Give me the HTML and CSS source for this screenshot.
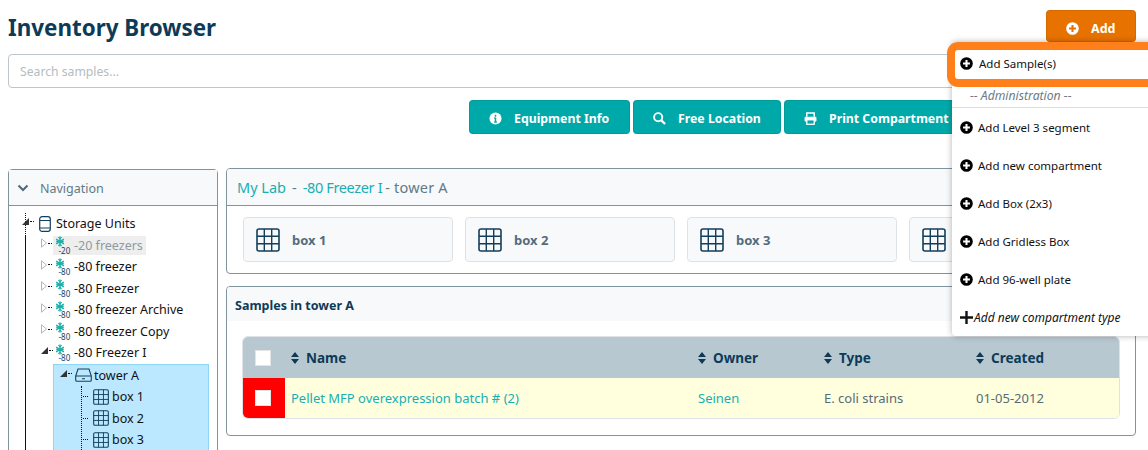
FILE: index.html
```html
<!DOCTYPE html>
<html lang="en">
<head>
<meta charset="utf-8">
<title>Inventory Browser</title>
<link rel="stylesheet" href="styles.css">
</head>
<body>
<svg class="defs" width="0" height="0" aria-hidden="true">
  <defs>
    <symbol id="grid" viewBox="0 0 24 24"><rect x="1" y="1" width="22" height="22" rx="2" fill="none" stroke="currentColor" stroke-width="1.6"/><path d="M8.3 1v22M15.7 1v22M1 8.3h22M1 15.7h22" fill="none" stroke="currentColor" stroke-width="1.4"/></symbol>
    <symbol id="flake" viewBox="0 0 10 12"><g stroke="currentColor" fill="none"><path d="M5 .5v11M.8 3.400l8.400 5.200M9.200 3.400.8 8.600" stroke-width="1.500"/><path d="M3.200 1.200 5 3l1.800-1.800M3.200 10.800 5 9l1.800 1.800M1 5.400 3 6 1 6.600M9 5.400 7 6l2 .6" stroke-width="1.100"/></g></symbol>
    <symbol id="open" viewBox="0 0 7 7"><path d="M7 0v7H0z" fill="#333"/></symbol>
    <symbol id="closed" viewBox="0 0 6 10"><path d="M.5.8l5 4.200-5 4.200z" fill="#fff" stroke="#b5b5b5"/></symbol>
    <symbol id="pluscircle" viewBox="0 0 14 14"><circle cx="7" cy="7" r="6.800" fill="currentColor"/><path d="M7 3.300v7.400M3.300 7h7.400" stroke="var(--plus,#fff)" stroke-width="2.200"/></symbol>
    <symbol id="sort" viewBox="0 0 8 12"><path d="M4 0l4 5H0zM4 12l4-5H0z" fill="currentColor"/></symbol>
  </defs>
</svg>

<header class="topbar">
  <h1 class="title">Inventory Browser</h1>
  <button class="btn btn-add"><svg class="ic13 plus-orange"><use href="#pluscircle"/></svg><span>Add</span></button>
</header>

<input class="search" type="text" placeholder="Search samples...">

<div class="actions">
  <button class="btn btn-teal btn-info"><svg class="ic13" viewBox="0 0 14 14"><circle cx="7" cy="7" r="6.500" fill="#fff"/><path d="M7 3v2M7 6.200v4.600M5.600 6.400H7M5.600 10.800h2.800" stroke="#00a9a9" stroke-width="1.600" fill="none"/></svg><span>Equipment Info</span></button>
  <button class="btn btn-teal btn-free"><svg class="ic13" viewBox="0 0 14 14"><circle cx="5.600" cy="5.600" r="4.400" fill="none" stroke="#fff" stroke-width="2"/><path d="M9 9l4 4" stroke="#fff" stroke-width="2.400"/></svg><span>Free Location</span></button>
  <button class="btn btn-teal btn-print"><svg class="ic13" viewBox="0 0 14 14"><path d="M3 5V1h8v4" fill="none" stroke="#fff" stroke-width="1.600"/><rect x=".6" y="5" width="12.800" height="5.400" rx="1.400" fill="#fff"/><rect x="3" y="8.400" width="8" height="4.800" fill="#00a9a9" stroke="#fff" stroke-width="1.400"/></svg><span>Print Compartment</span></button>
</div>

<div class="columns">
  <aside class="nav">
    <div class="nav-head">
      <svg class="chev" viewBox="0 0 12 8"><path d="M1.500 1.500 6 6l4.500-4.500" fill="none" stroke="#4d6a7c" stroke-width="2"/></svg>
      <span>Navigation</span>
    </div>
    <ul class="tree">
      <li class="lvl1">
        <div class="node">
          <span class="tg"><svg class="tri"><use href="#open"/></svg></span>
          <svg class="ic-storage" viewBox="0 0 12 16"><rect x=".7" y=".7" width="10.600" height="14.600" rx="2.400" fill="none" stroke="#123f5c" stroke-width="1.200"/><path d="M.8 4.500h10.400M.8 12h10.400" stroke="#123f5c" stroke-width="1"/></svg>
          <span class="label">Storage Units</span>
        </div>
        <ul class="lvl2">
          <li class="node"><span class="tg"><svg class="tri-c"><use href="#closed"/></svg></span><span class="hl"><span class="fr"><svg class="flake"><use href="#flake"/></svg><small>-20</small></span><span class="label muted">-20 freezers</span></span></li>
          <li class="node"><span class="tg"><svg class="tri-c"><use href="#closed"/></svg></span><span class="fr"><svg class="flake"><use href="#flake"/></svg><small>-80</small></span><span class="label">-80 freezer</span></li>
          <li class="node"><span class="tg"><svg class="tri-c"><use href="#closed"/></svg></span><span class="fr"><svg class="flake"><use href="#flake"/></svg><small>-80</small></span><span class="label">-80 Freezer</span></li>
          <li class="node"><span class="tg"><svg class="tri-c"><use href="#closed"/></svg></span><span class="fr"><svg class="flake"><use href="#flake"/></svg><small>-80</small></span><span class="label">-80 freezer Archive</span></li>
          <li class="node"><span class="tg"><svg class="tri-c"><use href="#closed"/></svg></span><span class="fr"><svg class="flake"><use href="#flake"/></svg><small>-80</small></span><span class="label">-80 freezer Copy</span></li>
          <li class="node"><span class="tg"><svg class="tri"><use href="#open"/></svg></span><span class="fr"><svg class="flake"><use href="#flake"/></svg><small>-80</small></span><span class="label">-80 Freezer I</span></li>
          <li class="selected">
            <div class="node">
              <span class="tg3"><svg class="tri"><use href="#open"/></svg></span>
              <svg class="ic-tower" viewBox="0 0 17 14"><path d="M3 1h11l2.300 7v4a1.300 1.300 0 0 1-1.300 1.300H2a1.300 1.300 0 0 1-1.300-1.300V8z" fill="none" stroke="#123f5c" stroke-width="1.100"/><path d="M.8 8h15.400M7 10.800h3" stroke="#123f5c" stroke-width="1.100" fill="none"/></svg>
              <span class="label">tower A</span>
            </div>
            <ul class="lvl4">
              <li class="node"><span class="tg4"></span><svg class="ic-box"><use href="#grid"/></svg><span class="label">box 1</span></li>
              <li class="node"><span class="tg4"></span><svg class="ic-box"><use href="#grid"/></svg><span class="label">box 2</span></li>
              <li class="node"><span class="tg4"></span><svg class="ic-box"><use href="#grid"/></svg><span class="label">box 3</span></li>
            </ul>
          </li>
        </ul>
      </li>
    </ul>
  </aside>

  <main class="content">
    <section class="panel">
      <div class="crumbs"><a>My Lab</a><span class="sep1">-</span><a class="tight">-80 Freezer I</a><span class="sep2">- tower A</span></div>
      <div class="cards">
        <div class="card"><svg class="ic-card"><use href="#grid"/></svg><b>box 1</b></div>
        <div class="card"><svg class="ic-card"><use href="#grid"/></svg><b>box 2</b></div>
        <div class="card"><svg class="ic-card"><use href="#grid"/></svg><b>box 3</b></div>
        <div class="card"><svg class="ic-card"><use href="#grid"/></svg><b>box 4</b></div>
      </div>
    </section>

    <section class="panel samples">
      <div class="samples-head">Samples in tower A</div>
      <div class="table">
        <div class="tr thead">
          <div class="cell check"><span class="box"></span></div>
          <div class="cell"><svg class="sort"><use href="#sort"/></svg>Name</div>
          <div class="cell"><svg class="sort"><use href="#sort"/></svg>Owner</div>
          <div class="cell"><svg class="sort"><use href="#sort"/></svg>Type</div>
          <div class="cell"><svg class="sort"><use href="#sort"/></svg>Created</div>
        </div>
        <div class="tr tbody">
          <div class="cell check red"><span class="box"></span></div>
          <div class="cell"><a>Pellet MFP overexpression batch # (2)</a></div>
          <div class="cell"><a>Seinen</a></div>
          <div class="cell">E. coli strains</div>
          <div class="cell">01-05-2012</div>
        </div>
      </div>
    </section>
  </main>
</div>

<div class="menu">
  <div class="menu-item first"><svg class="ic13"><use href="#pluscircle"/></svg>Add Sample(s)</div>
  <div class="menu-head">-- Administration --</div>
  <div class="menu-item"><svg class="ic13"><use href="#pluscircle"/></svg>Add Level 3 segment</div>
  <div class="menu-item"><svg class="ic13"><use href="#pluscircle"/></svg>Add new compartment</div>
  <div class="menu-item"><svg class="ic13"><use href="#pluscircle"/></svg>Add Box (2x3)</div>
  <div class="menu-item"><svg class="ic13"><use href="#pluscircle"/></svg>Add Gridless Box</div>
  <div class="menu-item"><svg class="ic13"><use href="#pluscircle"/></svg>Add 96-well plate</div>
  <div class="menu-item last"><svg class="ic-plus" viewBox="0 0 12 12"><path d="M6 0v12M0 6h12" stroke="currentColor" stroke-width="2.200"/></svg><em>Add new compartment type</em></div>
</div>
<div class="spot"></div>
</body>
</html>
```
FILE: styles.css
```css
* { box-sizing: border-box; }
html, body { margin: 0; height: 450px; overflow: hidden; }
body { padding: 0 12px 0 8px; position: relative; font-family: "Noto Sans", "Open Sans", sans-serif; font-size: 13px; color: #0d3b57; background: #fff; }
ul { list-style: none; margin: 0; padding: 0; }
.defs { position: absolute; }
a { color: #00a9a9; }
button { font-family: inherit; }

.topbar { display: flex; justify-content: space-between; height: 54px; padding-top: 10px; }
.title { margin: 0; font-size: 22.4px; line-height: 36px; font-weight: 700; color: #0d3b57; }
.btn { display: inline-flex; align-items: center; border: 1px solid rgba(0,0,0,.08); border-radius: 4px; color: #fff; font-size: 12.3px; font-weight: 700; padding: 0; }
.btn-add { width: 90px; height: 32px; background: #e77200; font-size: 12.5px; padding: 4px 0 0 19px; gap: 12px; }
.plus-orange { color: #fff; --plus: #e77200; }
.ic13 { width: 13px; height: 13px; flex: none; }

.search { display: block; width: 100%; height: 34px; border: 1px solid #bcc6cc; border-radius: 4px; padding: 0 11px; font: 12.2px "Noto Sans", sans-serif; }
.search::placeholder { color: #b3bcc2; }

.actions { display: flex; gap: 3px; margin: 12px 0 0 461px; height: 34px; }
.btn-teal { background: #00a9a9; padding: 2px 0 0 19px; gap: 12px; height: 34px; flex: none; }
.btn-info { width: 161px; }
.btn-free { width: 148px; }
.btn-print { width: 180px; }

.columns { display: flex; gap: 8px; margin-top: 34px; align-items: flex-start; }
.nav { flex: none; width: 210px; margin-top: 1px; height: 400px; border: 1px solid #7f949f; border-radius: 4px; background: #fff; }
.nav-head { display: flex; align-items: center; height: 36px; background: #f8f9fa; border-bottom: 1px solid #7f949f; padding: 1px 0 0 8px; gap: 11px; color: #607a8a; font-size: 12.5px; }
.chev { width: 12px; height: 8px; }

.tree { padding: 7px 0 0 9px; position: relative; color: #111; font-size: 12.5px; }
.tree::before { content: ""; position: absolute; left: 16px; top: 7px; bottom: 0; border-left: 1px dotted #111; }
.node { display: flex; align-items: center; height: 21.5px; position: relative; }
.label { white-space: nowrap; }
.tg { width: 18px; flex: none; display: flex; align-items: center; position: relative; padding: 0 0 4px 5px; }
.lvl1 > .node .tg { width: 21px; padding-left: 4px; }
.tg::after, .tg3::after { content: ""; width: 4px; border-top: 1px dotted #111; margin-left: 1px; }
.tri { width: 7px; height: 7px; flex: none; }
.tri-c { width: 6px; height: 10px; flex: none; }
.ic-storage { width: 12px; height: 16px; margin-right: 5px; flex: none; }
.lvl2 { padding-left: 18px; position: relative; }
.lvl2::before { content: ""; position: absolute; left: 7px; top: 0; height: 400px; border-left: 1px dotted #111; }
.fr { position: relative; display: block; width: 18px; height: 20px; flex: none; margin-right: 2px; }
.flake { position: absolute; left: 1px; top: 1px; width: 10px; height: 11px; color: #1ab0aa; }
.fr small { position: absolute; left: 4.500px; top: 10.500px; font-size: 8px; line-height: 10px; color: #123f5c; }
.hl { display: flex; align-items: center; background: #eeeeee; width: 93px; height: 19px; margin-left: -1px; padding-left: 1px; }
.muted { color: #8c9aa3; }

.selected { margin-left: 17px; width: 156px; height: 200px; border: 1px solid #8ed6f5; background: #bce8ff; position: relative; }
.tg3 { width: 21px; flex: none; display: flex; align-items: center; padding: 0 0 4px 6px; }
.ic-tower { width: 17px; height: 14px; margin-right: 2px; flex: none; }
.lvl4 { position: relative; }
.lvl4::before { content: ""; position: absolute; left: 27px; top: 0; height: 180px; border-left: 1px dotted #111; }
.tg4 { width: 5px; margin: 0 5px 0 29px; flex: none; border-top: 1px dotted #111; }
.ic-box { width: 16px; height: 16px; color: #123f5c; margin-right: 3px; flex: none; }

.content { flex: 1; min-width: 0; display: flex; flex-direction: column; gap: 12px; }
.panel { border: 1px solid #7f949f; border-radius: 4px; background: #fff; overflow: hidden; }
.crumbs { height: 37px; line-height: 37px; padding-left: 10px; background: #f8f9fa; border-bottom: 1px solid #7f949f; font-size: 14.5px; color: #607a8a; }
.crumbs a { color: #18aeb4; }
.crumbs .tight { letter-spacing: -.35px; }
.sep1 { margin: 0 6px; }
.sep2 { margin-left: 3px; letter-spacing: .2px; }
.cards { display: flex; gap: 12px; padding: 11px 16px 11px; }
.card { flex: none; width: 210px; height: 45px; display: flex; align-items: center; padding-left: 12px; gap: 12px; background: #f8f9fa; border: 1px solid #dee2e6; border-radius: 4px; color: #566b7a; font-size: 13px; }
.ic-card { width: 24px; height: 24px; color: #123f5c; flex: none; }

.samples-head { height: 34px; line-height: 37px; padding-left: 8px; background: #f8f9fa; font-weight: 700; font-size: 12.5px; color: #0d3b57; }
.table { margin: 15px 15px 16px; border: 1px solid #dee2e6; border-radius: 6px; overflow: hidden; }
.tr { display: grid; grid-template-columns: 42px 407px 126px 152px 1fr; align-items: center; }
.thead { height: 41px; background: #b8c8d1; font-weight: 700; font-size: 13.5px; color: #0d3b57; }
.tbody { height: 40px; background: #ffffdd; color: #566b7a; font-size: 13px; }
.cell { padding-left: 6px; display: flex; align-items: center; height: 100%; white-space: nowrap; }
.tbody .cell { padding-bottom: 1px; }
.cell a { color: #18aeb4; }
.thead .check, .tbody .check { padding: 0 0 0 12px; }
.red { background: #ff0000; }
.box { width: 16px; height: 16px; background: #fff; border: 1px solid #e4e4e4; display: block; }
.sort { width: 8px; height: 12px; margin-right: 7px; color: #0d3b57; flex: none; }

.menu { position: absolute; left: 952px; top: 42px; width: 210px; height: 294px; background: #fff; box-shadow: 0 0 6px rgba(0,0,0,.3); border-radius: 4px; color: #111; font-size: 11.5px; }
.menu-item { display: flex; align-items: center; height: 38px; padding-left: 8px; gap: 5px; white-space: nowrap; }
.menu-item .ic13 { color: #000; --plus: #fff; }
.menu-item.first { height: 42px; gap: 6px; }
.menu-head { height: 24px; border-bottom: 1px solid #dedede; padding-left: 18px; line-height: 24px; font-style: italic; font-size: 12.2px; color: #6c7a86; }
.last { font-size: 12px; }
.ic-plus { width: 13px; height: 13px; flex: none; margin-right: -4px; }
.spot { position: absolute; left: 947px; top: 42px; width: 220px; height: 45px; border: 8px solid #ff7f1a; border-radius: 11px; }
```
